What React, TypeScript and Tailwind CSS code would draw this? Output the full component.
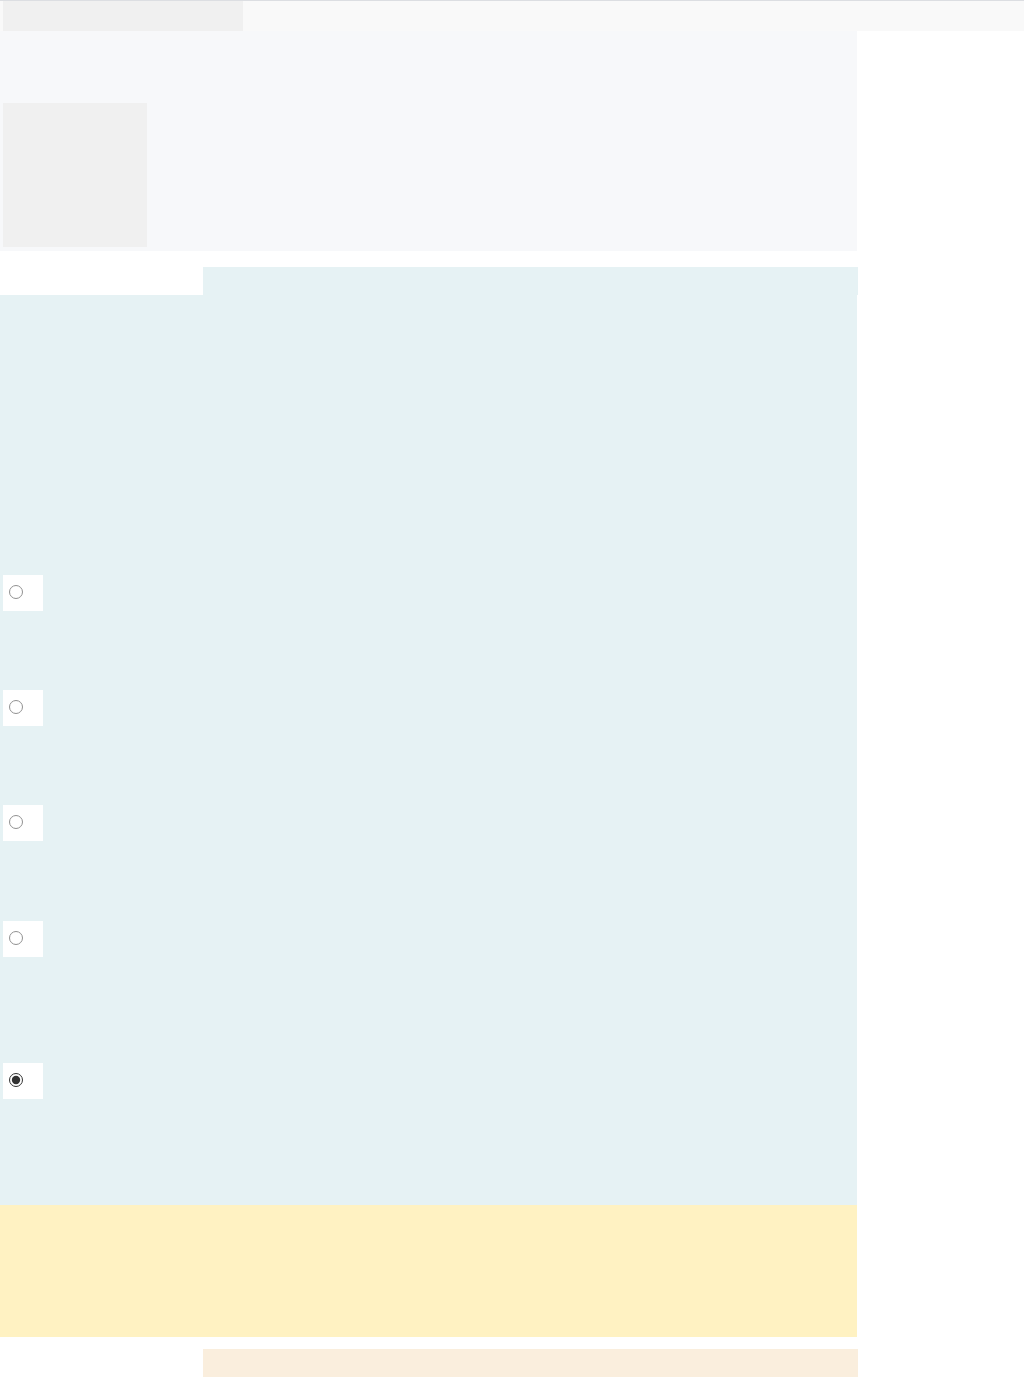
import { useState } from "react";

const rows = ["mt-[280px]", "mt-[79px]", "mt-[79px]", "mt-[80px]", "mt-[106px]"];

export default function App() {
  const [picked, setPicked] = useState(4);

  return (
    <div className="w-[1024px] min-h-[1377px] bg-white" style={{ fontFamily: "'Liberation Sans', Arial, sans-serif" }}>
      {/* top strip */}
      <div className="h-[31px] bg-[#f9f9f9] border-t border-[#dcdee2] pl-[3px]">
        <div className="w-[240px] h-[30px] bg-[#f0f0f0]" />
      </div>

      {/* header panel */}
      <div className="w-[857px] h-[220px] bg-[#f7f8fa] pl-[3px] pt-[72px]">
        <div className="w-[144px] h-[144px] bg-[#f0f0f0]" />
      </div>

      <div className="h-[16px]" />

      {/* question block */}
      <div className="ml-[203px] w-[655px] h-[28px] bg-[#e6f2f4]" />
      <div className="w-[857px] h-[910px] bg-[#e6f2f4] flex flex-col">
        {rows.map((m, i) => (
          <label key={i} className={`${m} ml-[3px] w-[40px] h-[36px] bg-white flex items-start pt-[10px] pl-[6px]`}>
            <input
              type="radio"
              name="choice"
              checked={picked === i}
              onChange={() => setPicked(i)}
              className="w-[14px] h-[14px] m-0 opacity-80 accent-black"
            />
          </label>
        ))}
      </div>

      {/* notice */}
      <div className="w-[857px] h-[132px] bg-[#fff2c2]" />

      <div className="h-[12px]" />
      <div className="ml-[203px] w-[655px] h-[28px] bg-[#faeedd]" />
    </div>
  );
}
